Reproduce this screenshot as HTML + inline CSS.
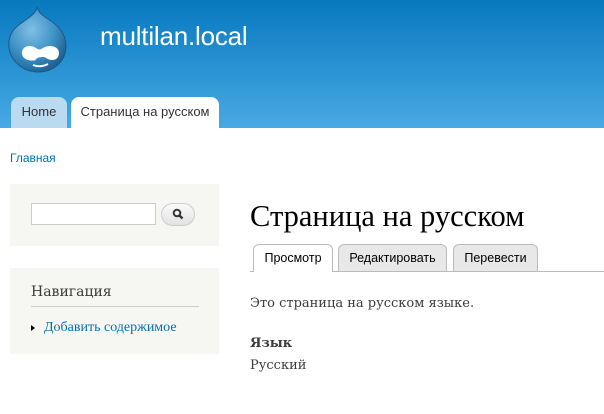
<!DOCTYPE html>
<html><head><meta charset="utf-8"><style>
*{margin:0;padding:0;box-sizing:border-box}
body{width:604px;height:414px;overflow:hidden;background:#fff;position:relative;font-family:"Liberation Sans",sans-serif}
.a{position:absolute}
#hd{left:0;top:0;width:604px;height:128px;background:linear-gradient(#0779bf,#48a9e4)}
.serif{font-family:"DejaVu Serif","Liberation Serif",serif}
</style></head><body>
<div id="hd" class="a"></div>
<svg class="a" style="left:0;top:0" width="80" height="80" viewBox="0 0 80 80">
<defs><radialGradient id="g" cx="0.4" cy="0.35" r="0.7"><stop offset="0" stop-color="#7fc0e6"/><stop offset="0.6" stop-color="#3d8fc4"/><stop offset="1" stop-color="#1c5e8e"/></radialGradient></defs>
<path d="M37 7 C36 14 28 18 20 24 C10 31 8 40 9 48 C11 62 24 72 38 72 C54 72 66 61 66 46 C66 32 56 24 48 19 C42 15 38 12 37 7Z" fill="url(#g)" stroke="#1b5a88" stroke-width="1"/>
<path d="M22 53 C22 46 30 44 36 48 C39 50 40 50 43 48 C49 44 59 46 59 53 C59 60 52 62 46 58 C43 56 40 57 38 59 C34 62 22 61 22 53Z" fill="#fff"/>
<path d="M33 65 Q40 68 48 64" stroke="#fff" stroke-width="2" fill="none"/>
<path d="M36 60 Q40 56 44 60" stroke="#3d8fc4" stroke-width="1.5" fill="none"/>
</svg>
<div class="a" style="left:100px;top:21px;font-size:26px;color:#fff;letter-spacing:-0.2px">multilan.local</div>
<div class="a" style="left:11px;top:97px;width:56px;height:31px;background:#b9daf0;border-radius:8px 8px 0 0;font-size:13px;color:#333;text-align:center;line-height:30px">Home</div>
<div class="a" style="left:71px;top:97px;width:148px;height:31px;background:#fff;border-radius:8px 8px 0 0;font-size:13px;color:#333;text-align:center;line-height:30px">Страница на русском</div>
<div class="a" style="left:10px;top:151px;font-size:12px;color:#0071b3">Главная</div>
<div class="a" style="left:10px;top:184px;width:209px;height:62px;background:#f6f6f2"></div>
<div class="a" style="left:31px;top:203px;width:125px;height:22px;background:#fff;border:1px solid #ccc"></div>
<div class="a" style="left:161px;top:203px;width:34px;height:23px;background:linear-gradient(#fafafa,#e2e2e2);border:1px solid #ccc;border-radius:12px"></div>
<svg class="a" style="left:172px;top:208px" width="13" height="13" viewBox="0 0 13 13"><circle cx="5" cy="5" r="3.3" stroke="#333" stroke-width="2" fill="none"/><path d="M7.5 7.5 L10.5 10.5" stroke="#333" stroke-width="2.4"/></svg>
<div class="a" style="left:10px;top:268px;width:209px;height:86px;background:#f6f6f2"></div>
<div class="a serif" style="left:31px;top:284px;font-size:14px;color:#3b3b3b">Навигация</div>
<div class="a" style="left:31px;top:306px;width:168px;height:1px;background:#ccc"></div>
<div class="a" style="left:31px;top:325px;width:0;height:0;border-left:4px solid #000;border-top:3.5px solid transparent;border-bottom:3.5px solid transparent"></div>
<div class="a" style="left:44px;top:320px;font-size:14px;color:#0071b3;font-family:'Liberation Serif',serif">Добавить содержимое</div>
<div class="a" style="left:250px;top:199px;font-size:30.5px;color:#000;font-family:'Liberation Serif',serif">Страница на русском</div>
<div class="a" style="left:250px;top:271px;width:354px;height:1px;background:#bbb"></div>
<div class="a" style="left:253px;top:244px;width:80px;height:28px;background:#fff;border:1px solid #bbb;border-bottom:none;border-radius:6px 6px 0 0;font-size:12.5px;text-align:center;line-height:26px;color:#000">Просмотр</div>
<div class="a" style="left:338px;top:244px;width:109px;height:27px;background:#e8e8e8;border:1px solid #bbb;border-bottom:none;border-radius:6px 6px 0 0;font-size:12.5px;text-align:center;line-height:26px;color:#000">Редактировать</div>
<div class="a" style="left:453px;top:244px;width:85px;height:27px;background:#e8e8e8;border:1px solid #bbb;border-bottom:none;border-radius:6px 6px 0 0;font-size:12.5px;text-align:center;line-height:26px;color:#000">Перевести</div>
<div class="a serif" style="left:250px;top:296px;font-size:13px;color:#3b3b3b">Это страница на русском языке.</div>
<div class="a serif" style="left:250px;top:336px;font-size:13px;color:#3b3b3b;font-weight:bold">Язык</div>
<div class="a serif" style="left:250px;top:358px;font-size:13px;color:#3b3b3b">Русский</div>
</body></html>
